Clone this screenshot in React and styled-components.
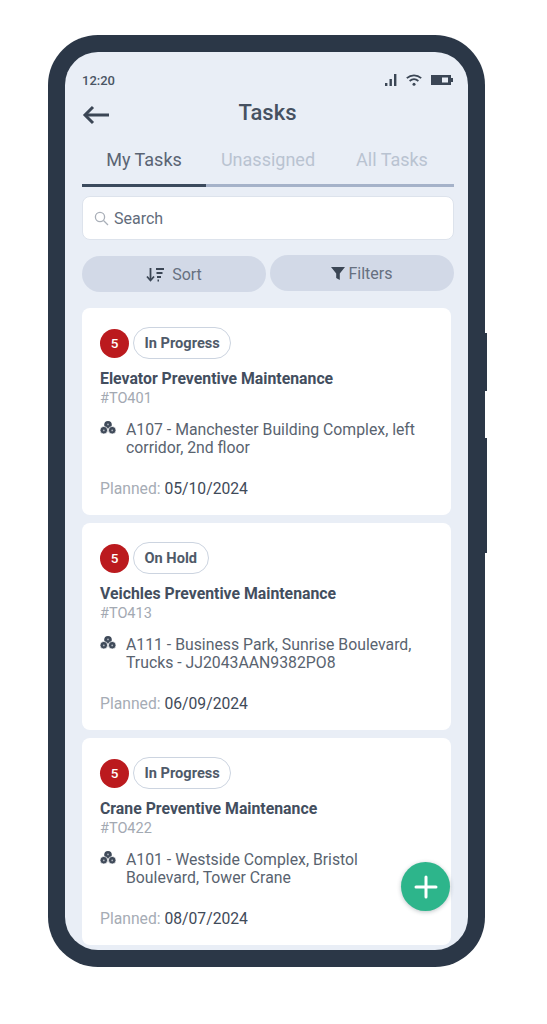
import * as React from "react";
import styled, { createGlobalStyle } from "styled-components";

const GlobalStyle = createGlobalStyle`
  html, body {
    margin: 0;
    background: #ffffff;
    font-family: Roboto, "Liberation Sans", sans-serif;
  }
  * { box-sizing: border-box; }
`;

const Page = styled.div`
  width: 547px;
  height: 1024px;
  padding: 35px 0 0 48px;
  overflow: hidden;
`;

const Phone = styled.div`
  position: relative;
  width: 437px;
  height: 932px;
  background: #2b3747;
  border-radius: 50px;
  padding: 17px;
`;

const SideButton = styled.span`
  position: absolute;
  left: 437px;
  top: ${(p) => p.$top}px;
  width: 2px;
  height: ${(p) => p.$height}px;
  background: #2b3747;
`;

const Screen = styled.div`
  position: relative;
  width: 403px;
  height: 898px;
  background: #e9eef6;
  border-radius: 33px;
  overflow: hidden;
  padding: 0 14px 0 17px;
`;

const StatusBar = styled.div`
  height: 44px;
  padding: 13px 0 0;
  display: flex;
  justify-content: space-between;
  align-items: center;
  font-size: 13px;
  font-weight: 500;
  color: #4a5564;
`;

const StatusIcons = styled.div`
  display: flex;
  align-items: center;
  gap: 9px;
  margin: -2px 1px 0 0;
`;

const Header = styled.div`
  position: relative;
  height: 39px;
  display: flex;
  align-items: center;
  justify-content: center;
`;

const BackButton = styled.div`
  position: absolute;
  left: 0;
  top: 9px;
  display: flex;
`;

const Title = styled.h1`
  margin: 0 0 6px -1px;
  font-size: 22px;
  font-weight: 500;
  color: #465161;
`;

const Tabs = styled.div`
  display: grid;
  grid-template-columns: repeat(3, 124px);
  height: 49px;
  margin-top: 3px;
  border-bottom: 3px solid #a5b2c9;
`;

const Tab = styled.div`
  display: flex;
  justify-content: center;
  padding-top: 11px;
  font-size: 18px;
  height: 49px;
  color: ${(p) => (p.$active ? "#5a6473" : "#b9c3d1")};
  border-bottom: 3px solid ${(p) => (p.$active ? "#3b4a5d" : "transparent")};
`;

const SearchBox = styled.div`
  height: 44px;
  margin-top: 9px;
  display: flex;
  align-items: center;
  gap: 5px;
  padding-left: 11px;
  background: #ffffff;
  border: 1px solid #dde3ec;
  border-radius: 8px;
  font-size: 16px;
  color: #626c7b;
`;

const ActionRow = styled.div`
  display: grid;
  grid-template-columns: 184px 184px;
  gap: 4px;
  margin: 15px 0 16px;
`;

const ActionButton = styled.div`
  height: 36px;
  margin-top: ${(p) => p.$offset || 0}px;
  padding-top: 1px;
  display: flex;
  align-items: center;
  justify-content: center;
  gap: ${(p) => p.$gap}px;
  background: #d2d9e7;
  border-radius: 18px;
  font-size: 16px;
  color: #667080;
`;

const CardList = styled.div`
  display: flex;
  flex-direction: column;
  gap: 8px;
  margin-right: 3px;
`;

const Card = styled.div`
  height: 207px;
  padding: 19px 18px 0;
  background: #ffffff;
  border-radius: 8px;
`;

const CardTop = styled.div`
  display: flex;
  align-items: center;
  gap: 4px;
`;

const Priority = styled.div`
  width: 29px;
  height: 29px;
  display: flex;
  align-items: center;
  justify-content: center;
  background: #bb1a1e;
  border-radius: 50%;
  color: #ffffff;
  font-size: 13.5px;
  font-weight: 500;
`;

const Status = styled.div`
  height: 32px;
  padding: 0 10.5px;
  display: flex;
  align-items: center;
  background: #ffffff;
  border: 1px solid #ccd4e0;
  border-radius: 16px;
  font-size: 14.6px;
  font-weight: 700;
  color: #4f5a69;
`;

const TaskName = styled.div`
  margin-top: 10px;
  font-size: 15.8px;
  line-height: 20px;
  font-weight: 700;
  color: #434e5e;
`;

const TaskId = styled.div`
  margin-top: 1px;
  font-size: 14.5px;
  line-height: 18px;
  color: #a3a9b2;
`;

const Location = styled.div`
  display: flex;
  gap: 10px;
  margin-top: 13px;
  height: 46px;
  font-size: 15.8px;
  line-height: 18px;
  color: #59636f;
`;

const AssetIcon = styled.svg`
  flex: none;
  width: 16px;
  height: 13px;
`;

const Planned = styled.div`
  margin-top: 12px;
  font-size: 15.7px;
  line-height: 20px;
  color: #a6acb5;

  b {
    font-weight: 400;
    color: #3f4a59;
  }
`;

const Fab = styled.div`
  position: absolute;
  left: 336px;
  top: 810px;
  width: 49px;
  height: 49px;
  display: flex;
  align-items: center;
  justify-content: center;
  background: #2db58b;
  border-radius: 50%;
  box-shadow: 0 1px 4px rgba(40, 60, 70, 0.3);
`;

const tasks = [
  {
    status: "In Progress",
    name: "Elevator Preventive Maintenance",
    id: "#TO401",
    location: "A107 - Manchester Building Complex, left corridor, 2nd floor",
    date: "05/10/2024",
  },
  {
    status: "On Hold",
    name: "Veichles Preventive Maintenance",
    id: "#TO413",
    location: "A111 - Business Park, Sunrise Boulevard, Trucks - JJ2043AAN9382PO8",
    date: "06/09/2024",
  },
  {
    status: "In Progress",
    name: "Crane Preventive Maintenance",
    id: "#TO422",
    location: "A101 - Westside Complex, Bristol Boulevard, Tower Crane",
    date: "08/07/2024",
  },
];

const Asset = () => (
  <AssetIcon viewBox="0 0 16 13">
    <circle cx="8" cy="3.800" r="3.800" fill="#3f4a59" />
    <circle cx="3.800" cy="9.200" r="3.800" fill="#3f4a59" stroke="#fff" strokeWidth="0.7" />
    <circle cx="12.200" cy="9.200" r="3.800" fill="#3f4a59" stroke="#fff" strokeWidth="0.7" />
    <circle cx="8" cy="3.400" r="0.900" fill="#aeb4bd" />
    <circle cx="3.800" cy="9.400" r="0.900" fill="#aeb4bd" />
    <circle cx="12.200" cy="9.400" r="0.900" fill="#aeb4bd" />
  </AssetIcon>
);

const App = () => {
  return (
    <Page>
      <GlobalStyle />
      <Phone>
        <SideButton $top={298} $height={58} />
        <SideButton $top={403} $height={115} />
        <Screen>
          <StatusBar>
            <span>12:20</span>
            <StatusIcons>
              <svg width="12" height="12" viewBox="0 0 12 12" fill="#3b4655">
                <rect x="0" y="9" width="2.400" height="3" />
                <rect x="4.500" y="5" width="2.400" height="7" />
                <rect x="9" y="0" width="2.400" height="12" />
              </svg>
              <svg width="16" height="12" viewBox="0 0 16 12" fill="none" stroke="#3b4655" strokeWidth="1.800">
                <path d="M.8 4.200C5 .4 11 .4 15.200 4.200" />
                <path d="M3.600 7c2.600-2.200 6.200-2.200 8.800 0" />
                <circle cx="8" cy="10.300" r="1.500" fill="#3b4655" stroke="none" />
              </svg>
              <svg width="22" height="10" viewBox="0 0 22 10">
                <rect x="0" y="0" width="20" height="10" fill="#3b4655" />
                <rect x="11" y="2.500" width="6" height="5" fill="#e9eef6" />
                <rect x="20" y="3" width="2" height="4" fill="#3b4655" />
              </svg>
            </StatusIcons>
          </StatusBar>
          <Header>
            <BackButton>
              <svg width="28" height="20" viewBox="0 0 28 20" fill="none" stroke="#3b4655" strokeWidth="3">
                <path d="M27 10H3" />
                <path d="M11 2l-8 8 8 8" />
              </svg>
            </BackButton>
            <Title>Tasks</Title>
          </Header>
          <Tabs>
            <Tab $active>My Tasks</Tab>
            <Tab>Unassigned</Tab>
            <Tab>All Tasks</Tab>
          </Tabs>
          <SearchBox>
            <svg width="15" height="15" viewBox="0 0 15 15" fill="none" stroke="#a9afb8" strokeWidth="1.300">
              <circle cx="6" cy="6" r="4.600" />
              <path d="M9.500 9.500L14 14" />
            </svg>
            Search
          </SearchBox>
          <ActionRow>
            <ActionButton $gap={7} $offset={1}>
              <svg width="19" height="15" viewBox="0 0 19 15" fill="none" stroke="#3b4655" strokeWidth="1.800">
                <path d="M4.500 1v12" />
                <path d="M1 9.500l3.500 4 3.500-4" />
                <path d="M10 2h8M10.500 6h6M11 10h4M11.500 13.500h1.500" />
              </svg>
              Sort
            </ActionButton>
            <ActionButton $gap={3}>
              <svg width="14" height="13" viewBox="0 0 14 13" fill="#3b4655">
                <path d="M0 0h14L8.800 6.500V13L5.200 11V6.500z" />
              </svg>
              Filters
            </ActionButton>
          </ActionRow>
          <CardList>
            {tasks.map((task) => (
              <Card key={task.id}>
                <CardTop>
                  <Priority>5</Priority>
                  <Status>{task.status}</Status>
                </CardTop>
                <TaskName>{task.name}</TaskName>
                <TaskId>{task.id}</TaskId>
                <Location>
                  <Asset />
                  <span>{task.location}</span>
                </Location>
                <Planned>
                  Planned: <b>{task.date}</b>
                </Planned>
              </Card>
            ))}
          </CardList>
          <Fab>
            <svg width="24" height="24" viewBox="0 0 24 24" fill="none" stroke="#ffffff" strokeWidth="3" strokeLinecap="round">
              <path d="M12 2v20M2 12h20" />
            </svg>
          </Fab>
        </Screen>
      </Phone>
    </Page>
  );
};

export default App;
